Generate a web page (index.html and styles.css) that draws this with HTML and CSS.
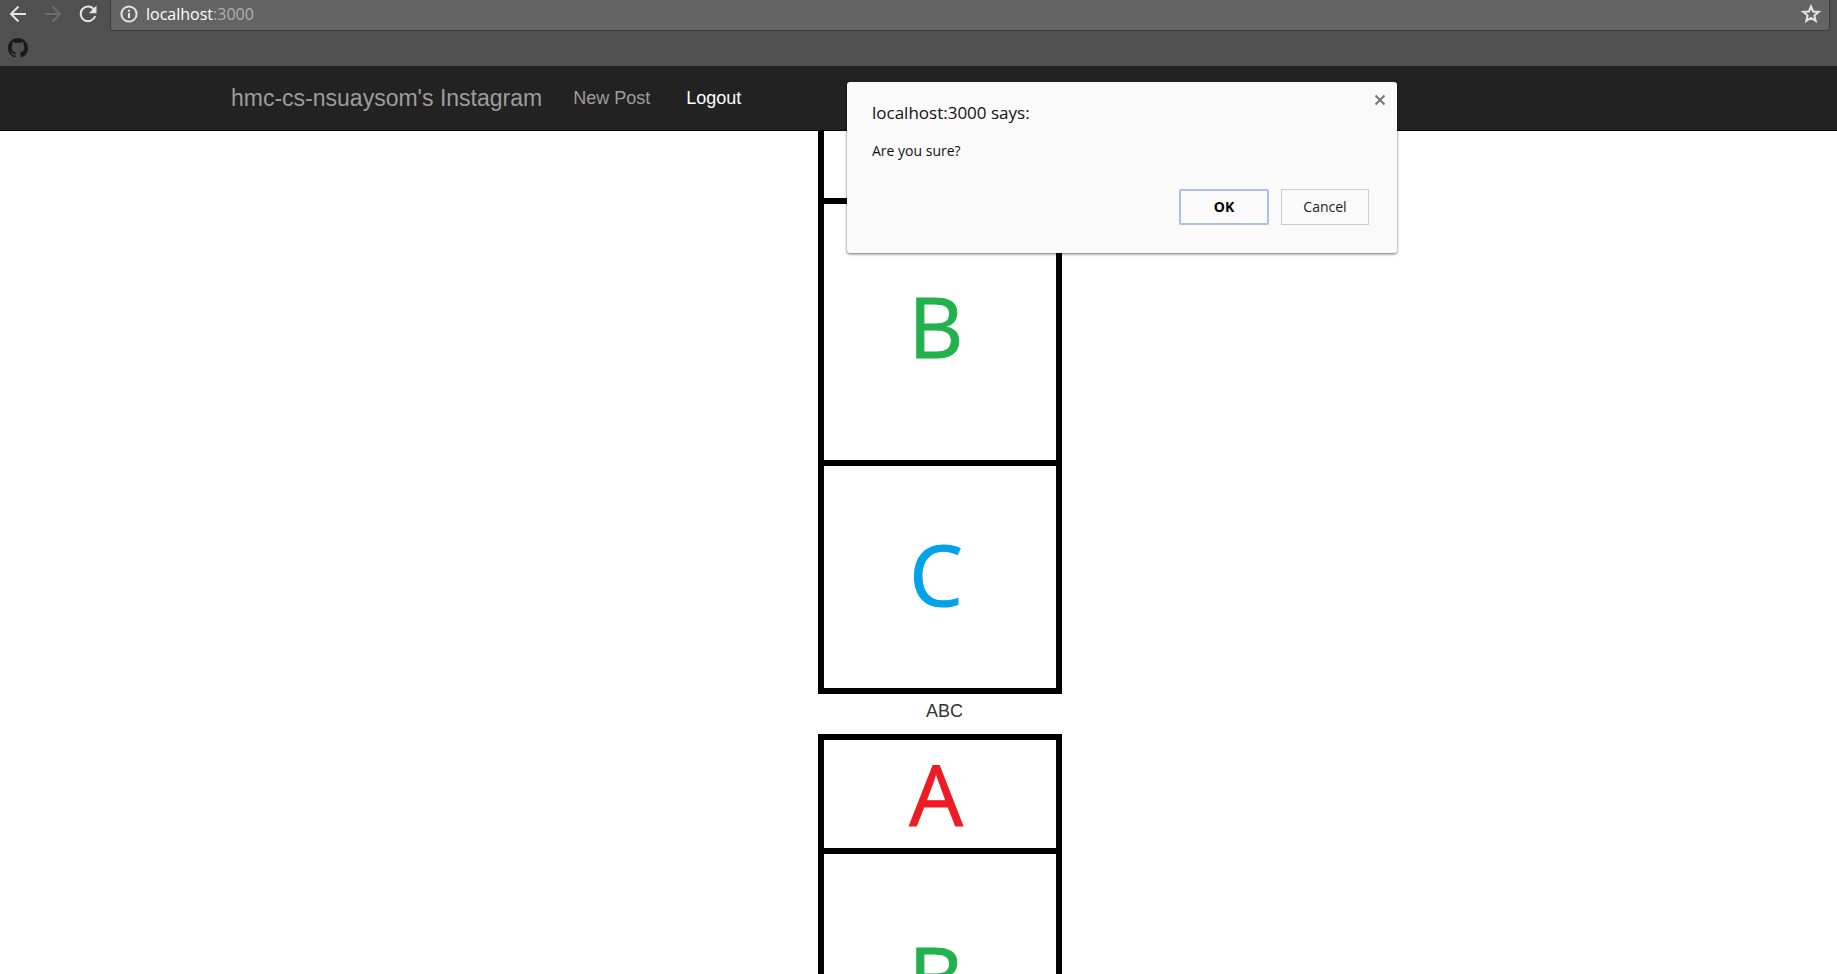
FILE: index.html
```
<!DOCTYPE html>
<html lang="en">
<head>
<meta charset="utf-8">
<title>Instagram</title>
<link rel="stylesheet" href="styles.css">
</head>
<body>
<header class="browser">
  <div class="toolbar">
    <div class="history">
      <button class="tool" aria-label="Back"><svg viewBox="0 0 20 20"><path d="M18 10H3M10.500 2.500L3 10l7.500 7.500"/></svg></button>
      <button class="tool tool-off" aria-label="Forward" disabled><svg viewBox="0 0 20 20"><path d="M2 10h15M9.500 2.500L17 10l-7.500 7.500"/></svg></button>
      <button class="tool" aria-label="Reload"><svg viewBox="0 0 20 20"><path d="M16 5.300A7.400 7.400 0 1 0 17.200 12"/><path class="solid" d="M18.500 1.500v7.700h-7.700z"/></svg></button>
    </div>
    <div class="omnibox">
      <svg class="info" viewBox="0 0 18 18"><circle cx="9" cy="9" r="7.600"/><path d="M9 8v5M9 4.800v1.900"/></svg>
      <span class="address"><span class="host">localhost</span>:3000</span>
      <button class="tool star" aria-label="Bookmark this page"><svg viewBox="0 0 20 20"><path d="M10 2.400l2.100 5.100 5.500.4-4.200 3.600 1.300 5.400-4.700-2.900-4.700 2.900 1.300-5.400-4.200-3.600 5.500-.4z"/></svg></button>
    </div>
  </div>
  <div class="bookmarks">
    <a href="#" class="bookmark" aria-label="GitHub"><svg viewBox="0 0 16 16"><path d="M8 0C3.580 0 0 3.580 0 8c0 3.540 2.290 6.530 5.470 7.590.4.070.55-.17.55-.38 0-.19-.01-.82-.01-1.490-2.010.37-2.530-.49-2.690-.94-.09-.23-.48-.94-.82-1.130-.28-.15-.68-.52-.01-.53.63-.01 1.080.58 1.230.82.72 1.210 1.870.87 2.330.66.07-.52.28-.87.51-1.070-1.780-.2-3.640-.89-3.640-3.950 0-.87.31-1.590.82-2.150-.08-.2-.36-1.020.08-2.120 0 0 .67-.21 2.200.82.64-.18 1.320-.27 2-.27s1.360.09 2 .27c1.530-1.040 2.200-.82 2.200-.82.44 1.100.16 1.920.08 2.120.51.56.82 1.270.82 2.150 0 3.070-1.870 3.750-3.650 3.950.29.25.54.73.54 1.480 0 1.070-.01 1.930-.01 2.200 0 .21.15.46.55.38A8.010 8.010 0 0 0 16 8c0-4.420-3.580-8-8-8z"/></svg></a>
  </div>
</header>
<nav class="navbar">
  <a class="brand" href="#">hmc-cs-nsuaysom's Instagram</a>
  <a class="nav-link" href="#">New Post</a>
  <a class="nav-link active" href="#">Logout</a>
</nav>
<main class="page">
  <ul class="feed">
    <li class="post">
      <div class="picture">
        <div class="cell a"></div>
        <div class="cell b">B</div>
        <div class="cell c">C</div>
      </div>
      <p class="caption">ABC</p>
    </li>
    <li class="post">
      <div class="picture">
        <div class="cell a">A</div>
        <div class="cell b">B</div>
      </div>
    </li>
  </ul>
</main>
<dialog class="confirm" open aria-labelledby="confirm-title">
  <button class="close" aria-label="Close"><svg viewBox="0 0 12 12"><path d="M1.500 1.500l9 9M10.500 1.500l-9 9"/></svg></button>
  <h1 class="confirm-title" id="confirm-title">localhost:3000 says:</h1>
  <p class="message">Are you sure?</p>
  <div class="actions">
    <button class="action primary">OK</button>
    <button class="action">Cancel</button>
  </div>
</dialog>
</body>
</html>
```
FILE: styles.css
```
* { box-sizing: border-box; }
body {
  margin: 0;
  height: 100vh;
  display: flex;
  flex-direction: column;
  overflow: hidden;
  background: #fff;
  color: #333;
  font-family: "Liberation Sans", Arial, sans-serif;
  font-size: 18px;
}
button { padding: 0; border: 0; background: none; font: inherit; }
a { text-decoration: none; }
svg { display: block; fill: none; stroke: currentColor; }

.browser {
  position: relative;
  z-index: 2;
  flex: none;
  background: #505050;
  font-family: "Open Sans", "Noto Sans", sans-serif;
}
.toolbar { display: flex; height: 31px; padding-right: 7px; }
.history { display: flex; align-items: center; gap: 15px; width: 110px; padding: 0 0 3px 8px; }
.tool { width: 20px; height: 20px; color: #e4e4e4; }
.tool svg { width: 20px; height: 20px; stroke-width: 2; }
.tool-off { color: #6e6e6e; }
.solid { fill: currentColor; stroke: none; }
.omnibox {
  flex: 1;
  display: flex;
  align-items: center;
  gap: 8px;
  padding: 0 8px 2px 9px;
  background: #646464;
  border: 1px solid #3c3c3c;
  border-top: 0;
  border-radius: 0 0 3px 3px;
}
.info { width: 18px; height: 18px; stroke: #e4e4e4; stroke-width: 2; }
.address { flex: 1; font-size: 16px; line-height: 24px; color: #b0b0b0; }
.host { color: #fff; }
.bookmarks { height: 35px; padding: 7px 8px; }
.bookmark { display: block; width: 20px; color: #191919; }
.bookmark svg { width: 20px; height: 20px; fill: currentColor; stroke: none; }

.navbar {
  position: relative;
  z-index: 1;
  flex: none;
  display: flex;
  align-items: center;
  height: 65px;
  padding-left: 231px;
  background: #222;
  border-bottom: 1px solid #080808;
}
.brand, .nav-link { color: #9d9d9d; }
.brand { margin-right: 13px; font-size: 23px; }
.nav-link { padding: 0 18px; }
.nav-link.active { color: #fff; }

.page { flex: 1; min-height: 0; }
.feed { margin: -47px 0 0; padding: 0 0 0 52px; list-style: none; }
.post { display: flex; flex-direction: column; align-items: center; }
.picture {
  display: flex;
  flex-direction: column;
  gap: 6px;
  width: 244px;
  margin-right: 9px;
  padding: 6px;
  background: #000;
}
.cell {
  display: flex;
  align-items: center;
  justify-content: center;
  padding-right: 8px;
  background: #fff;
  font-family: "Open Sans", "Noto Sans", sans-serif;
  font-size: 85px;
  line-height: 106px;
  -webkit-text-stroke: 1px currentColor;
}
.a { height: 108px; padding-bottom: 2px; color: #ed1c24; }
.b { height: 256px; padding-bottom: 14px; color: #22b14c; }
.c { height: 222px; padding-bottom: 8px; color: #00a2e8; }
.caption { margin: 0; height: 40px; line-height: 34px; }

.confirm {
  position: absolute;
  z-index: 3;
  top: 82px;
  left: 847px;
  width: 550px;
  margin: 0;
  padding: 19px 28px 28px 25px;
  border: 0;
  border-radius: 3px;
  background: #fafafa;
  box-shadow: 0 1px 3px rgba(0, 0, 0, .6);
  color: #111;
  font-family: "Open Sans", "Noto Sans", sans-serif;
  font-size: 14px;
}
.close { position: absolute; top: 12px; right: 11px; width: 12px; height: 12px; color: #777; }
.close svg { width: 12px; height: 12px; stroke-width: 2; }
.confirm-title { margin: 0; font-size: 17px; font-weight: 400; line-height: 24px; }
.message { margin: 16px 0 28px; line-height: 20px; }
.actions { display: flex; justify-content: flex-end; gap: 12px; }
.action {
  width: 88px;
  height: 36px;
  padding-bottom: 2px;
  border: 1px solid #ccc;
  background: #fafafa;
  color: #222;
}
.primary { width: 90px; border: 2px solid #a9bfea; border-radius: 2px; color: #000; font-weight: 700; }
```
